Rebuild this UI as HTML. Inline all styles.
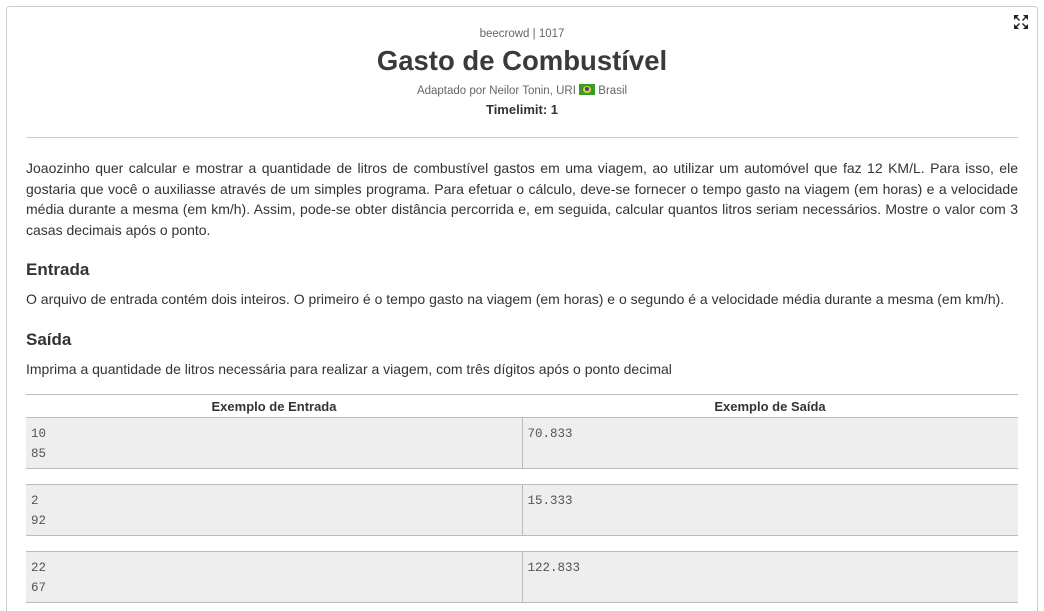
<!DOCTYPE html>
<html><head><meta charset="utf-8"><style>
html,body{margin:0;height:610px;overflow:hidden;background:#fff;font-family:"Liberation Sans",sans-serif;color:#3a3a3a;}
.box{position:absolute;left:6px;top:6px;width:1030px;height:604px;border:1px solid #ccc;border-bottom:none;border-radius:4px 4px 0 0;}
.hdr{position:absolute;left:0;width:1044px;text-align:center;}
.txt{position:absolute;left:26px;width:992px;font-size:14px;line-height:20.5px;text-align:justify;color:#333;}
h3{position:absolute;left:26px;margin:0;font-size:17px;font-weight:bold;color:#333;}
table{position:absolute;left:26px;width:992px;border-collapse:collapse;font-size:13px;}
td{border-top:1px solid #bbb;border-bottom:1px solid #bbb;background:#eee;vertical-align:top;font-family:"Liberation Mono",monospace;font-size:12.5px;color:#555;padding:6px 5px 4px;line-height:20px;height:39px;box-sizing:border-box}
td.l{border-right:1px solid #bbb;width:496px}
th{border-top:1px solid #bbb;font-weight:bold;height:22px;padding:0;color:#333}
</style></head><body>
<div class="box"></div>
<svg style="position:absolute;left:1013px;top:14px" width="16" height="16" viewBox="0 0 16 16"><g fill="#222"><path d="M1 1h5l-2 2 3 3-1 1-3-3-2 2z"/><path d="M15 1h-5l2 2-3 3 1 1 3-3 2 2z"/><path d="M1 15h5l-2-2 3-3-1-1-3 3-2-2z"/><path d="M15 15h-5l2-2-3-3 1-1 3 3 2-2z"/></g></svg>
<div class="hdr" style="top:28px;font-size:11.5px;color:#666">beecrowd | 1017</div>
<div class="hdr" style="top:45px;font-size:27.5px;font-weight:bold;color:#3a3a3a">Gasto de Combustível</div>
<div class="hdr" style="top:84px;font-size:11.5px;color:#666">Adaptado por Neilor Tonin, URI <span style="display:inline-block;width:16px;height:11px;background:#3a9a2a;vertical-align:-1px;position:relative"><span style="position:absolute;left:4px;top:2px;width:8px;height:7px;background:#e8d020;border-radius:50%"></span><span style="position:absolute;left:6px;top:3px;width:4px;height:4px;background:#2a4a9a;border-radius:50%"></span></span> Brasil</div>
<div class="hdr" style="top:102px;font-size:13px;font-weight:bold;color:#333">Timelimit: 1</div>
<div style="position:absolute;left:26px;top:137px;width:992px;border-top:1px solid #ccc"></div>
<div class="txt" style="top:158px">Joaozinho quer calcular e mostrar a quantidade de litros de combustível gastos em uma viagem, ao utilizar um automóvel que faz 12 KM/L. Para isso, ele gostaria que você o auxiliasse através de um simples programa. Para efetuar o cálculo, deve-se fornecer o tempo gasto na viagem (em horas) e a velocidade média durante a mesma (em km/h). Assim, pode-se obter distância percorrida e, em seguida, calcular quantos litros seriam necessários. Mostre o valor com 3 casas decimais após o ponto.</div>
<h3 style="top:260px">Entrada</h3>
<div class="txt" style="top:289px">O arquivo de entrada contém dois inteiros. O primeiro é o tempo gasto na viagem (em horas) e o segundo é a velocidade média durante a mesma (em km/h).</div>
<h3 style="top:330px">Saída</h3>
<div class="txt" style="top:359px">Imprima a quantidade de litros necessária para realizar a viagem, com três dígitos após o ponto decimal</div>
<table style="top:394px"><tr><th>Exemplo de Entrada</th><th>Exemplo de Saída</th></tr>
<tr><td class="l" style="height:51px">10<br>85</td><td style="height:51px">70.833</td></tr></table>
<table style="top:484px"><tr><td class="l" style="height:51px">2<br>92</td><td style="height:51px">15.333</td></tr></table>
<table style="top:551px"><tr><td class="l" style="height:51px">22<br>67</td><td style="height:51px">122.833</td></tr></table>
</body></html>
